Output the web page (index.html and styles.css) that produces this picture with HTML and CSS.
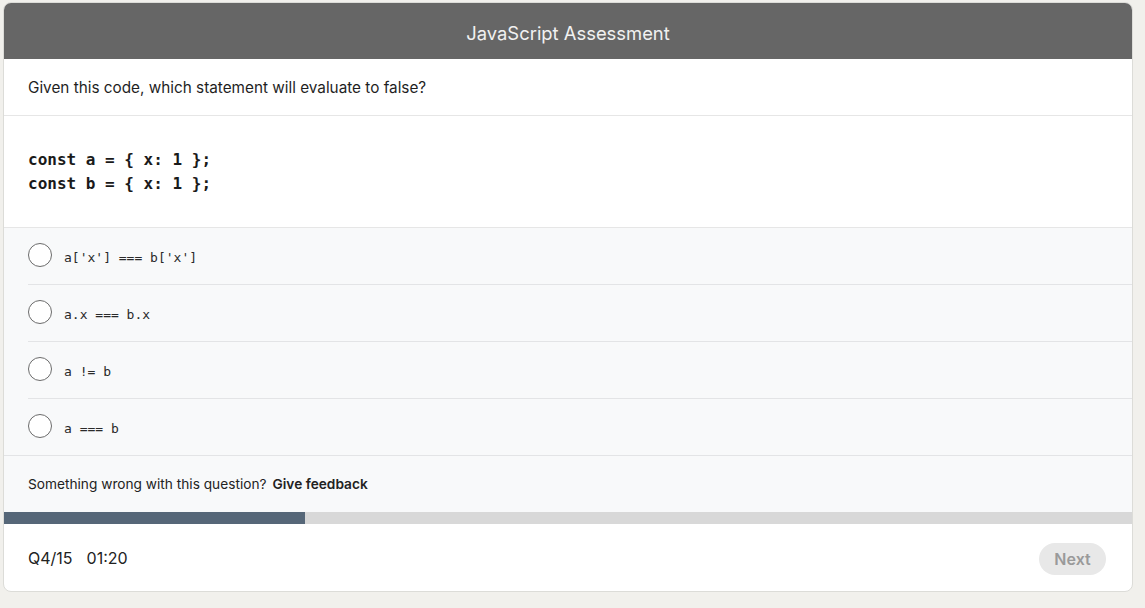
FILE: index.html
```html
<!DOCTYPE html>
<html>
<head>
<meta charset="utf-8">
<link rel="stylesheet" href="styles.css">
</head>
<body>
<div class="card">
  <div class="header">JavaScript Assessment</div>
  <div class="question">Given this code, which statement will evaluate to false?</div>
  <pre class="code">const a = { x: 1 };
const b = { x: 1 };</pre>
  <ul class="options">
    <li class="option"><span class="radio"></span><code>a['x'] === b['x']</code></li>
    <li class="option"><span class="radio"></span><code>a.x === b.x</code></li>
    <li class="option"><span class="radio"></span><code>a != b</code></li>
    <li class="option"><span class="radio"></span><code>a === b</code></li>
  </ul>
  <div class="feedback">Something wrong with this question? <b>Give feedback</b></div>
  <div class="progress"><div class="fill" style="width:26.67%"></div></div>
  <div class="footer">
    <div class="meta"><span>Q4/15</span><span>01:20</span></div>
    <button class="next">Next</button>
  </div>
</div>
</body>
</html>
```
FILE: styles.css
```css
html, body { margin: 0; padding: 0; }
body {
  background: #f1f0ec;
  font-family: Inter, "Noto Sans", sans-serif;
  color: #1f1f1f;
  padding: 2px 3px;
}
.card {
  width: 1128px;
  background: #fff;
  border: 1px solid #dcdcd8;
  border-radius: 8px;
  overflow: hidden;
}
.header {
  height: 56px;
  box-sizing: border-box;
  padding-top: 3px;
  background: #666666;
  color: #f1f1f1;
  font-size: 18.4px;
  display: flex;
  align-items: center;
  justify-content: center;
}
.question {
  height: 56px;
  border-bottom: 1px solid #e6e6e6;
  padding-left: 24px;
  display: flex;
  align-items: center;
  font-size: 15.3px;
}
.code {
  margin: 0;
  height: 112px;
  box-sizing: border-box;
  padding: 32px 24px 0;
  font-family: "DejaVu Sans Mono", monospace;
  font-weight: bold;
  font-size: 16px;
  line-height: 24px;
  color: #1a1a1a;
  border-bottom: 1px solid #e6e6e6;
}
.options {
  list-style: none;
  margin: 0;
  padding: 0;
  background: #f8f9fa;
}
.option {
  height: 56px;
  margin-left: 24px;
  display: flex;
  align-items: center;
  border-bottom: 1px solid #e3e4e6;
}
.option:last-child {
  margin-left: 0;
  padding-left: 24px;
}
.radio {
  width: 22px;
  height: 22px;
  border: 1.5px solid #6b6b6b;
  border-radius: 50%;
  margin-right: 12px;
  margin-top: -2px;
  background: #fff;
  flex: none;
}
.option code {
  font-family: "DejaVu Sans Mono", monospace;
  font-size: 13px;
  color: #2a2a2a;
  padding-top: 3px;
}
.feedback {
  height: 56px;
  background: #f8f9fa;
  padding-left: 24px;
  display: flex;
  align-items: center;
  font-size: 13.7px;
  color: #222;
}
.feedback b {
  font-weight: 600;
  margin-left: 6px;
}
.progress {
  height: 12px;
  background: #d8d8d8;
}
.fill {
  height: 100%;
  background: #566778;
}
.footer {
  height: 67px;
  display: flex;
  align-items: center;
  justify-content: space-between;
  padding: 0 26px 0 24px;
}
.meta {
  display: flex;
  gap: 14px;
  font-size: 16px;
  color: #222;
}
.next {
  border: none;
  background: #e8e8e8;
  color: #9a9a9a;
  font-family: Inter, "Noto Sans", sans-serif;
  font-weight: 600;
  font-size: 16px;
  height: 32px;
  width: 67px;
  border-radius: 16px;
  padding: 0;
  margin-top: 2px;
}
```
